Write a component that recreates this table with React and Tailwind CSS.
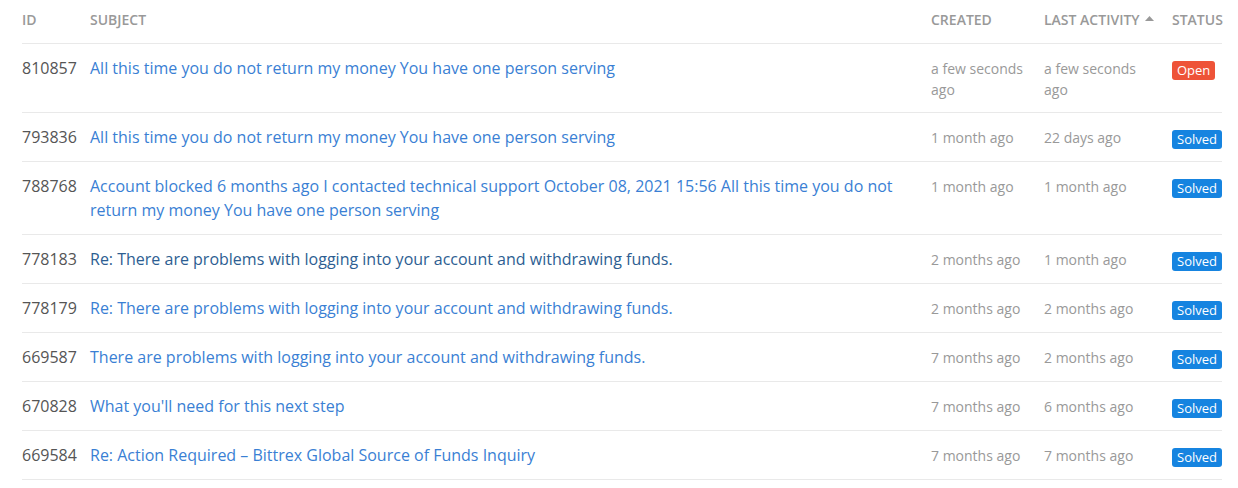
import React from "react";

const rows = [
  { id: "810857", subject: "All this time you do not return my money You have one person serving", created: "a few seconds ago", last: "a few seconds ago", status: "Open" },
  { id: "793836", subject: "All this time you do not return my money You have one person serving", created: "1 month ago", last: "22 days ago", status: "Solved" },
  { id: "788768", subject: "Account blocked 6 months ago I contacted technical support October 08, 2021 15:56 All this time you do not return my money You have one person serving", created: "1 month ago", last: "1 month ago", status: "Solved" },
  { id: "778183", subject: "Re: There are problems with logging into your account and withdrawing funds.", created: "2 months ago", last: "1 month ago", status: "Solved", visited: true },
  { id: "778179", subject: "Re: There are problems with logging into your account and withdrawing funds.", created: "2 months ago", last: "2 months ago", status: "Solved" },
  { id: "669587", subject: "There are problems with logging into your account and withdrawing funds.", created: "7 months ago", last: "2 months ago", status: "Solved" },
  { id: "670828", subject: "What you'll need for this next step", created: "7 months ago", last: "6 months ago", status: "Solved" },
  { id: "669584", subject: "Re: Action Required – Bittrex Global Source of Funds Inquiry", created: "7 months ago", last: "7 months ago", status: "Solved" },
];

const th = "text-left align-top pt-[10px] pb-[14px] text-[14px] leading-[19px] font-semibold text-[#999] uppercase whitespace-nowrap";

export default function App() {
  return (
    <div className="w-[1238px] h-[488px] bg-white overflow-hidden" style={{ fontFamily: '"Open Sans", sans-serif' }}>
      <table className="ml-[22px] w-[1200px] table-fixed border-collapse">
        <colgroup>
          <col className="w-[68px]" />
          <col className="w-[841px]" />
          <col className="w-[113px]" />
          <col className="w-[128px]" />
          <col className="w-[50px]" />
        </colgroup>
        <thead>
          <tr className="border-b border-[#e9e9e9]">
            <th className={th}>ID</th>
            <th className={th}>Subject</th>
            <th className={th}>Created</th>
            <th className={th}>
              <span className="inline-flex items-center">
                Last Activity
                <svg width="9" height="5" viewBox="0 0 9 5" className="ml-[5px] mb-[2px]">
                  <path d="M0 5 L4.5 0 L9 5 Z" fill="#999" />
                </svg>
              </span>
            </th>
            <th className={th}>Status</th>
          </tr>
        </thead>
        <tbody>
          {rows.map((r) => (
            <tr key={r.id + r.subject} className="border-b border-[#e9e9e9]">
              <td className="align-top pt-[12px] pb-[12px] text-[16px] leading-[24px] text-[#555]">{r.id}</td>
              <td className="align-top pt-[12px] pb-[12px] pr-[30px] text-[16px] leading-[24px]">
                <a href="#" className={r.visited ? "text-[#2d5e92]" : "text-[#3a7fd4]"}>{r.subject}</a>
              </td>
              <td className="align-top pt-[14px] pb-[12px] pr-[14px] text-[14px] leading-[21px] text-[#999]">{r.created}</td>
              <td className="align-top pt-[14px] pb-[12px] pr-[22px] text-[14px] leading-[21px] text-[#999]">{r.last}</td>
              <td className="align-top pt-[17px] pb-[12px] leading-[19px]">
                <div
                  className={
                    "w-fit rounded-[3px] px-[5px] text-[13px] leading-[19px] text-white " +
                    (r.status === "Open" ? "bg-[#ee5338]" : "bg-[#1684e0]")
                  }
                >
                  {r.status}
                </div>
              </td>
            </tr>
          ))}
        </tbody>
      </table>
    </div>
  );
}
